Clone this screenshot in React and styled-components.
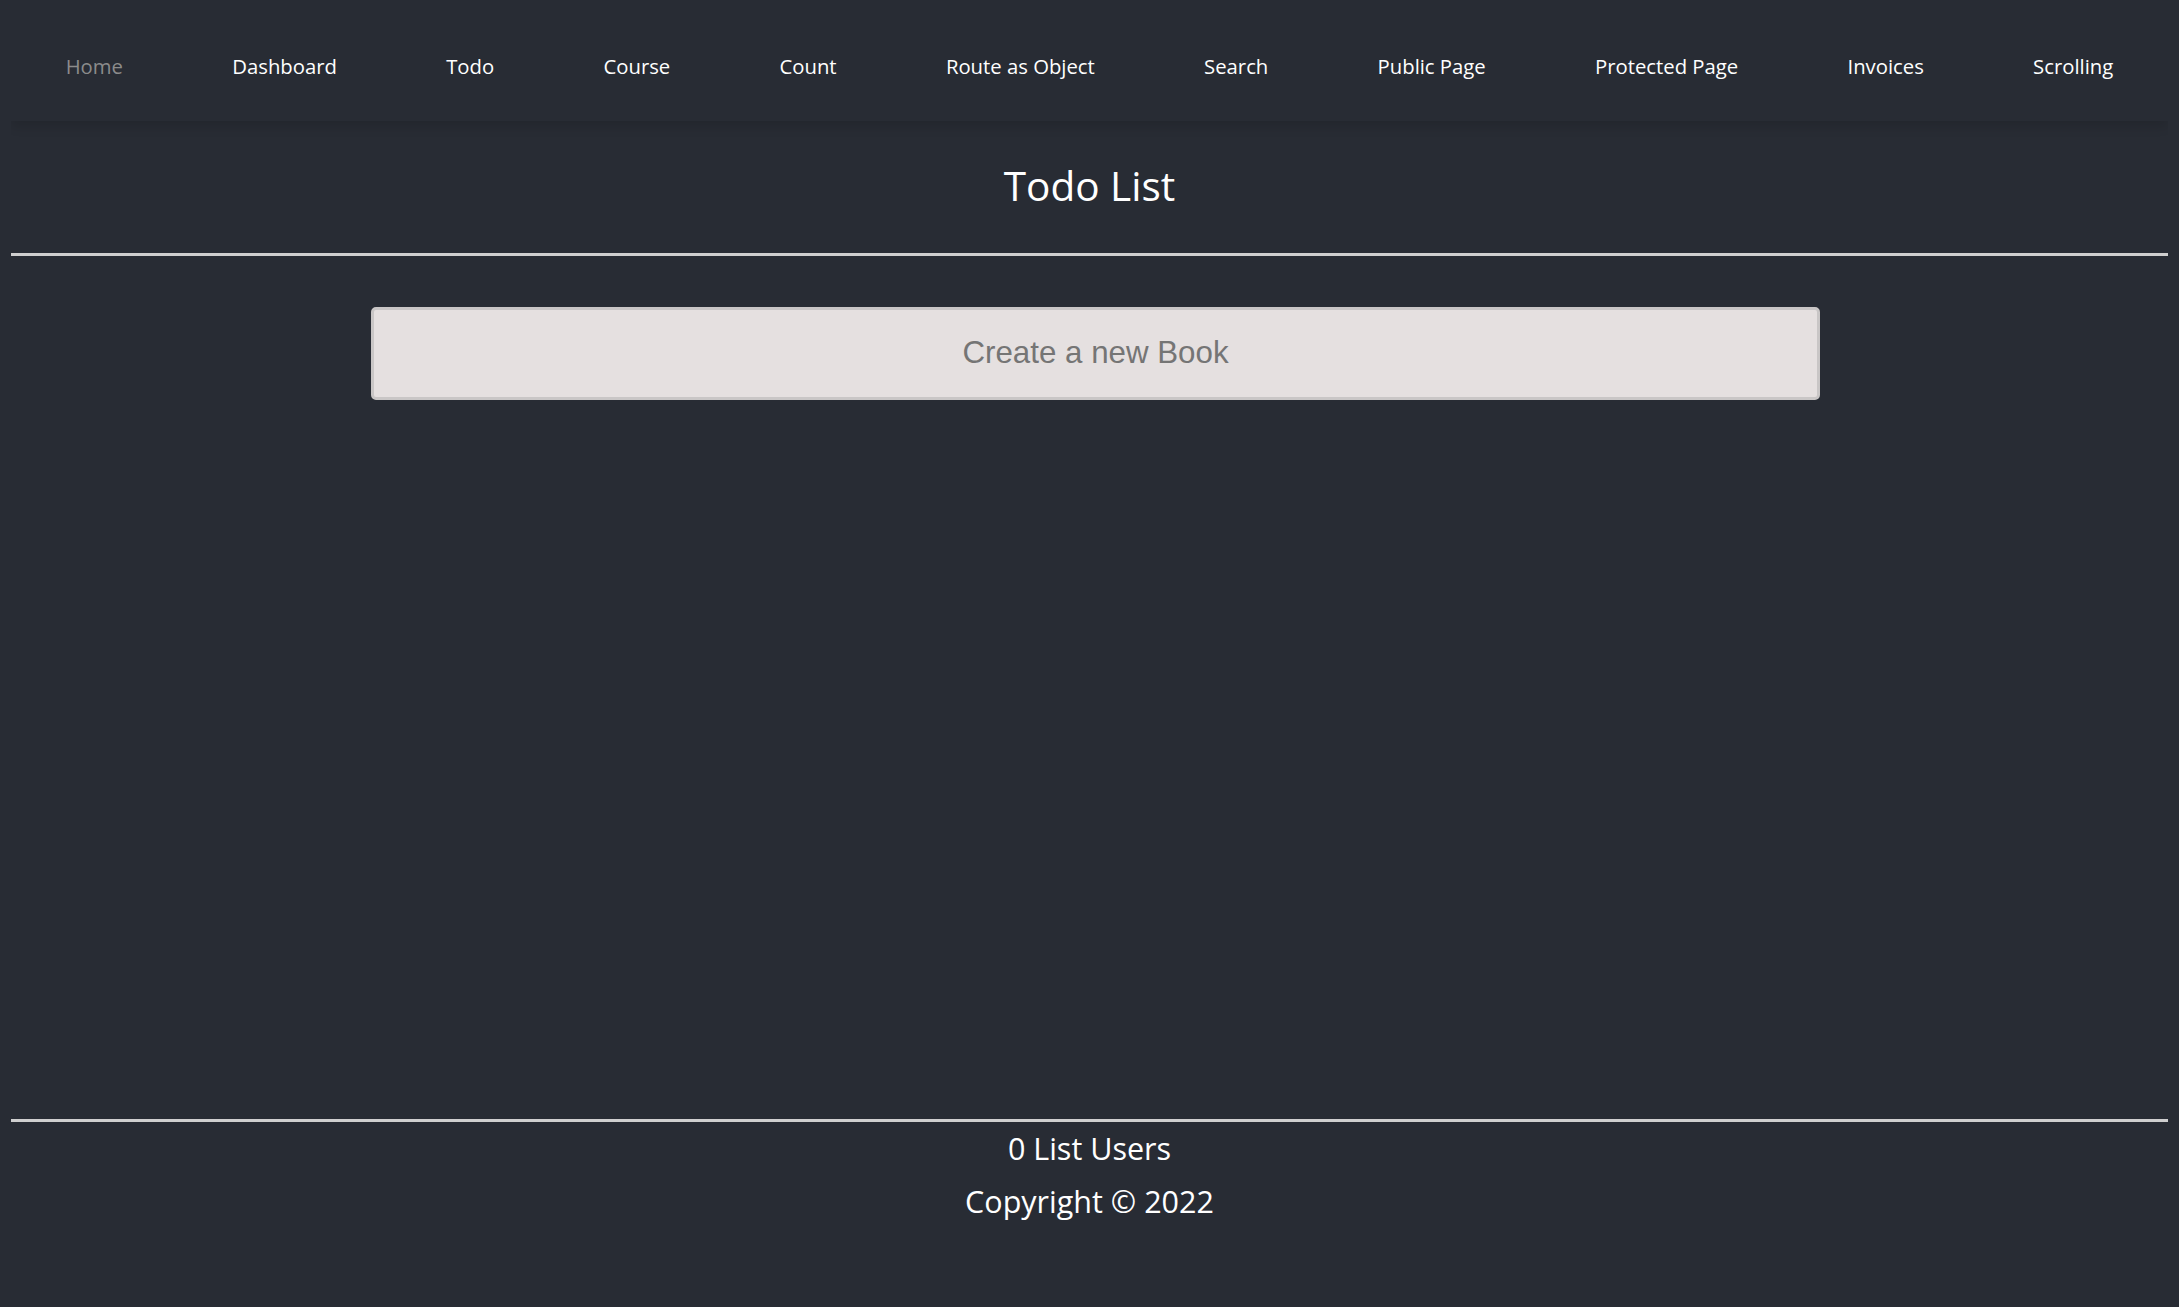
import styled, { createGlobalStyle } from "styled-components";

const GlobalStyle = createGlobalStyle`
  html, body {
    background-color: #282c34;
  }
  body {
    margin: 11px;
    font-family: "Open Sans", "Noto Sans", sans-serif;
    color: #ffffff;
  }
`;

const links = [
  "Home",
  "Dashboard",
  "Todo",
  "Course",
  "Count",
  "Route as Object",
  "Search",
  "Public Page",
  "Protected Page",
  "Invoices",
  "Scrolling",
];

const NavBar = styled.nav`
  height: 110px;
  display: flex;
  align-items: center;
  justify-content: space-around;
  background-color: #282c34;
  box-shadow: 0 6px 10px rgba(0, 0, 0, 0.12);
`;

const NavLink = styled.a`
  font-size: 20.3px;
  text-decoration: none;
  color: ${(p) => (p.$active ? "#8b8b8b" : "#ffffff")};
  cursor: pointer;
`;

const Main = styled.main`
  padding-top: 41px;
  min-height: 998px;
  box-sizing: border-box;
`;

const Title = styled.h1`
  margin: 0;
  font-size: 40.5px;
  font-weight: 400;
  line-height: 48.6px;
  text-align: center;
`;

const Rule = styled.hr`
  margin: ${(p) => p.$top}px 0 0;
  border: none;
  height: 3px;
  background-color: #cfcfcf;
`;

const FormRow = styled.form`
  display: flex;
  justify-content: center;
  padding-left: 12px;
  margin-top: 51px;
`;

const BookInput = styled.input`
  box-sizing: border-box;
  width: 1449px;
  height: 93px;
  border: 3px solid #c9c6c6;
  border-radius: 5px;
  background-color: #e5e0e0;
  font-family: "Liberation Sans", Arial, sans-serif;
  font-size: 31.3px;
  text-align: center;
  color: #333;
  &::placeholder {
    color: #757575;
  }
  &:focus {
    outline: none;
  }
`;

const Footer = styled.footer`
  text-align: center;
`;

const FooterLine = styled.p`
  margin: 0;
  font-size: 30.5px;
  line-height: 53px;
`;

export default function App() {
  return (
    <>
      <GlobalStyle />
      <NavBar>
        {links.map((name, i) => (
          <NavLink key={name} $active={i === 0} href="#">
            {name}
          </NavLink>
        ))}
      </NavBar>
      <Main>
        <Title>Todo List</Title>
        <Rule $top={42} />
        <FormRow onSubmit={(e) => e.preventDefault()}>
          <BookInput type="text" placeholder="Create a new Book" />
        </FormRow>
      </Main>
      <Footer>
        <Rule $top={0} />
        <FooterLine>0 List Users</FooterLine>
        <FooterLine>Copyright © 2022</FooterLine>
      </Footer>
    </>
  );
}
